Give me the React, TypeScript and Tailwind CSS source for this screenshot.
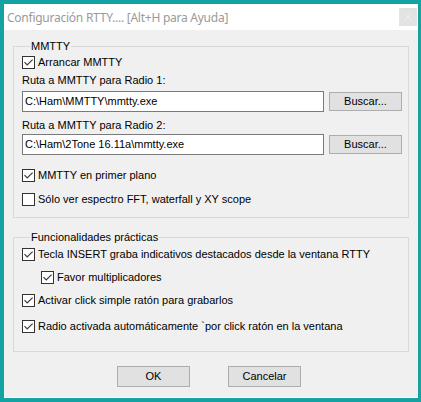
import React from "react";

function Check({ checked }: { checked?: boolean }) {
  return (
    <span className="w-[13px] h-[13px] shrink-0 border border-[#333333] bg-white flex items-center justify-center">
      {checked && (
        <svg width="11" height="11" viewBox="0 0 11 11">
          <path d="M1.5 5.2 L4.2 8 L9.6 2.6" stroke="#3c3c3c" strokeWidth="1.2" fill="none" />
        </svg>
      )}
    </span>
  );
}

function CheckRow({ label, checked, className = "" }: { label: string; checked?: boolean; className?: string }) {
  return (
    <div className={"h-[18px] flex items-center gap-[3px] " + className}>
      <Check checked={checked} />
      <span className="whitespace-nowrap">{label}</span>
    </div>
  );
}

function Btn({ label, className = "" }: { label: string; className?: string }) {
  return (
    <div
      className={
        "bg-[#e1e1e1] border border-[#adadad] flex items-center justify-center text-black " + className
      }
    >
      {label}
    </div>
  );
}

function PathRow({ value }: { value: string }) {
  return (
    <div className="flex items-center gap-[5px]">
      <div className="flex-1 h-[21px] bg-white border border-[#7a7a7a] flex items-center pl-[2px] whitespace-nowrap">
        {value}
      </div>
      <Btn label="Buscar..." className="w-[73px] h-[19px]" />
    </div>
  );
}

export default function App() {
  return (
    <div className="w-[421px] h-[402px] bg-[#14a2a2] pl-[4px] pt-[4px] pr-[3px] pb-[4px] font-['Liberation_Sans',Arial,sans-serif] text-[11px] leading-[13px] text-black">
      <div className="w-full h-full flex flex-col">
        {/* title bar */}
        <div className="h-[26px] bg-white flex items-center justify-between pl-[3px] pr-[1px]">
          <span className="font-['Noto_Sans',sans-serif] text-[12px] text-[#9a9a9a] tracking-[-0.25px]">
            Configuración RTTY.... [Alt+H para Ayuda]
          </span>
          <div className="w-[18px] h-[18px] bg-[#e3e3e3] flex items-center justify-center">
            <svg width="8" height="8" viewBox="0 0 8 8">
              <path d="M0.5 0.5 L7.5 7.5 M7.5 0.5 L0.5 7.5" stroke="#eeeeee" strokeWidth="1" />
            </svg>
          </div>
        </div>

        {/* body */}
        <div className="flex-1 bg-[#f0f0f0] border-b border-white px-[9px] pt-[10px]">
          <fieldset className="border border-[#d9d9d9] pl-[8px] pr-[6px] pb-[9px]">
            <legend className="ml-[8px] px-[1px]">MMTTY</legend>
            <CheckRow label="Arrancar MMTTY" checked />
            <div className="mt-[2px] h-[14px] flex items-center">Ruta a MMTTY para Radio 1:</div>
            <div className="mt-[4px]">
              <PathRow value="C:\Ham\MMTTY\mmtty.exe" />
            </div>
            <div className="mt-[6px] h-[14px] flex items-center">Ruta a MMTTY para Radio 2:</div>
            <div className="mt-[2px]">
              <PathRow value="C:\Ham\2Tone 16.11a\mmtty.exe" />
            </div>
            <CheckRow label="MMTTY en primer plano" checked className="mt-[11px]" />
            <CheckRow label="Sólo ver espectro FFT, waterfall y XY scope" className="mt-[6px]" />
          </fieldset>

          <fieldset className="mt-[13px] border border-[#d9d9d9] pl-[8px] pr-[6px] pb-[16px]">
            <legend className="ml-[8px] px-[1px]">Funcionalidades prácticas</legend>
            <CheckRow label="Tecla INSERT graba indicativos destacados desde la ventana RTTY" checked className="mt-[1px]" />
            <CheckRow label="Favor multiplicadores" checked className="mt-[5px] ml-[19px]" />
            <CheckRow label="Activar click simple ratón para grabarlos" checked className="mt-[5px]" />
            <CheckRow label="Radio activada automáticamente `por click ratón en la ventana" checked className="mt-[8px]" />
          </fieldset>

          <div className="mt-[14px] flex gap-[38px] pl-[104px]">
            <Btn label="OK" className="w-[73px] h-[21px]" />
            <Btn label="Cancelar" className="w-[73px] h-[21px]" />
          </div>
        </div>
      </div>
    </div>
  );
}
